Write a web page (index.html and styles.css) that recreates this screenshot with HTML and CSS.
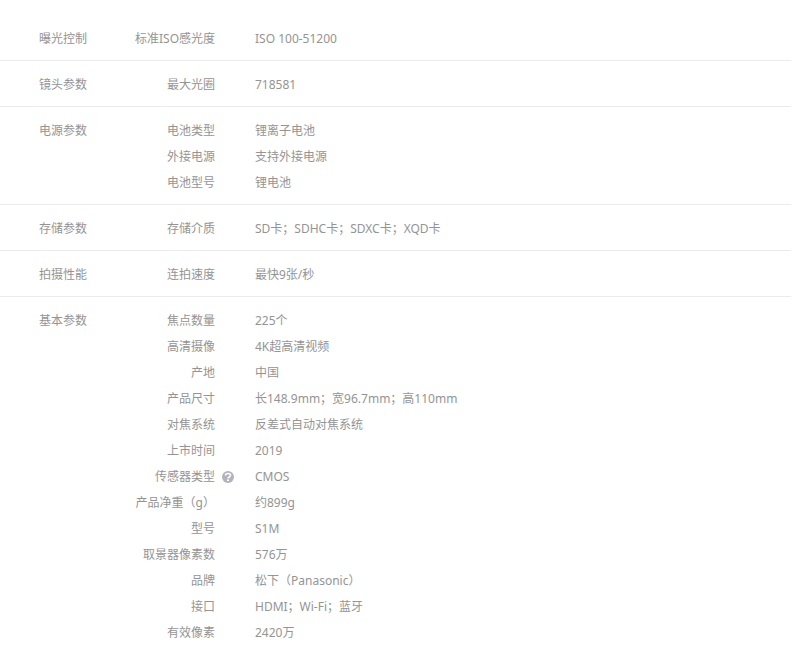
FILE: index.html
```html
<!DOCTYPE html>
<html lang="zh-CN">
    <head>
        <meta charset="UTF-8">
        <title>规格参数</title>
        <link rel="stylesheet" href="styles.css">
    </head>
    <body>
        <table class="params">
            <colgroup>
                <col class="col-group">
                <col class="col-name">
                <col>
            </colgroup>
            <tbody>
                <tr><th class="group" scope="rowgroup">曝光控制</th><th class="name" scope="row">标准ISO感光度</th><td>ISO 100-51200</td></tr>
            </tbody>
            <tbody>
                <tr><th class="group" scope="rowgroup">镜头参数</th><th class="name" scope="row">最大光圈</th><td>718581</td></tr>
            </tbody>
            <tbody>
                <tr><th class="group" scope="rowgroup" rowspan="3">电源参数</th><th class="name" scope="row">电池类型</th><td>锂离子电池</td></tr>
                <tr><th class="name" scope="row">外接电源</th><td>支持外接电源</td></tr>
                <tr><th class="name" scope="row">电池型号</th><td>锂电池</td></tr>
            </tbody>
            <tbody>
                <tr><th class="group" scope="rowgroup">存储参数</th><th class="name" scope="row">存储介质</th><td>SD卡；SDHC卡；SDXC卡；XQD卡</td></tr>
            </tbody>
            <tbody>
                <tr><th class="group" scope="rowgroup">拍摄性能</th><th class="name" scope="row">连拍速度</th><td>最快9张/秒</td></tr>
            </tbody>
            <tbody>
                <tr><th class="group" scope="rowgroup" rowspan="13">基本参数</th><th class="name" scope="row">焦点数量</th><td>225个</td></tr>
                <tr><th class="name" scope="row">高清摄像</th><td>4K超高清视频</td></tr>
                <tr><th class="name" scope="row">产地</th><td>中国</td></tr>
                <tr><th class="name" scope="row">产品尺寸</th><td>长148.9mm；宽96.7mm；高110mm</td></tr>
                <tr><th class="name" scope="row">对焦系统</th><td>反差式自动对焦系统</td></tr>
                <tr><th class="name" scope="row">上市时间</th><td>2019</td></tr>
                <tr>
                    <th class="name" scope="row">传感器类型<svg class="help" viewBox="0 0 24 24" aria-hidden="true"><circle cx="12" cy="12" r="12" fill="#b3b3bf"/><path d="M7 9C7 6 9 5 12 5s5 2 5 4c0 3-5 3-5 6" fill="none" stroke="#fff" stroke-width="3"/><rect x="10" y="17" width="4" height="3" fill="#fff"/></svg></th>
                    <td>CMOS</td>
                </tr>
                <tr><th class="name" scope="row">产品净重（g）</th><td>约899g</td></tr>
                <tr><th class="name" scope="row">型号</th><td>S1M</td></tr>
                <tr><th class="name" scope="row">取景器像素数</th><td>576万</td></tr>
                <tr><th class="name" scope="row">品牌</th><td>松下（Panasonic）</td></tr>
                <tr><th class="name" scope="row">接口</th><td>HDMI；Wi-Fi；蓝牙</td></tr>
                <tr><th class="name" scope="row">有效像素</th><td>2420万</td></tr>
            </tbody>
        </table>
    </body>
</html>
```
FILE: styles.css
```css
*{
    margin: 0;
    padding: 0;
}
body{
    padding: 15px 3px 0 0;
    background: #fff;
    color: #949494;
    font: 12px/26px "Noto Sans", "Noto Sans CJK SC", sans-serif;
}
.params{
    width: 100%;
    table-layout: fixed;
    border-spacing: 0;
}
.col-group{
    width: 127px;
}
.col-name{
    width: 88px;
}
.params th{
    font-weight: normal;
    vertical-align: top;
    white-space: nowrap;
}
.params .group{
    padding-left: 39px;
    text-align: left;
}
.params .name{
    position: relative;
    text-align: right;
}
.params td{
    padding-left: 40px;
}
/* 每组参数的上下间距和分隔线 */
.params tr:first-child > *{
    padding-top: 11px;
}
.params tr:last-child > *{
    padding-bottom: 8px;
}
.params tbody:not(:last-child) tr:last-child > *,
.params tbody:not(:last-child) .group{
    border-bottom: 1px solid #ebebeb;
}
.help{
    position: absolute;
    left: 100%;
    top: 7px;
    width: 12px;
    height: 12px;
    margin-left: 7px;
}
```
